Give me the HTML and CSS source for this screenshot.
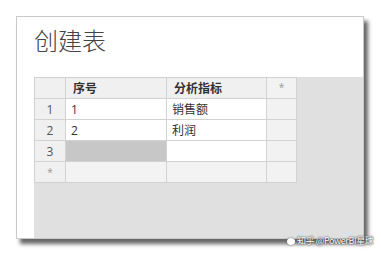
FILE: index.html
```html
<!DOCTYPE html>
<html lang="zh-CN">
<head>
    <meta charset="UTF-8">
    <title>创建表</title>
    <link rel="stylesheet" href="styles.css">
</head>
<body>
    <div class="dialog">
        <h1 class="title">创建表</h1>
        <div class="grid-area">
            <table class="grid">
                <tr class="head-row">
                    <td class="row-head"></td>
                    <td class="col-a">序号</td>
                    <td class="col-b">分析指标</td>
                    <td class="col-new">*</td>
                </tr>
                <tr>
                    <td class="row-head">1</td>
                    <td>1</td>
                    <td>销售额</td>
                    <td class="col-new"></td>
                </tr>
                <tr>
                    <td class="row-head">2</td>
                    <td>2</td>
                    <td>利润</td>
                    <td class="col-new"></td>
                </tr>
                <tr>
                    <td class="row-head">3</td>
                    <td class="selected"></td>
                    <td></td>
                    <td class="col-new"></td>
                </tr>
                <tr class="new-row">
                    <td class="row-head star">*</td>
                    <td></td>
                    <td></td>
                    <td class="col-new"></td>
                </tr>
            </table>
        </div>
    </div>
    <div class="watermark"><span class="wm-icon"></span>知乎 @PowerBI星球</div>
</body>
</html>
```

FILE: styles.css
```css
* {
    margin: 0;
    padding: 0;
    box-sizing: border-box;
}

body {
    width: 381px;
    height: 256px;
    background: #fff;
    font-family: 'Open Sans', 'Noto Sans CJK SC', sans-serif;
    color: #333;
    overflow: hidden;
    position: relative;
}

.dialog {
    margin: 16px 0 0 16px;
    width: 348px;
    height: 223px;
    background: #fff;
    border: 1px solid #c9c9c9;
    box-shadow: 4px 5px 4px rgba(0, 0, 0, 0.6);
    display: flex;
    flex-direction: column;
}

.title {
    font-family: 'Noto Sans CJK SC', sans-serif;
    font-weight: 300;
    font-size: 24px;
    line-height: 28px;
    color: #444;
    margin: 9px 0 0 17px;
    height: 51px;
}

.grid-area {
    flex: 1;
    margin-left: 17px;
    background: #e0e0e0;
}

.grid {
    border-collapse: collapse;
    font-size: 12px;
}

.grid td {
    height: 21px;
    border: 1px solid #d2d2d2;
    background: #fff;
    padding: 0 0 0 5px;
    line-height: 19px;
    white-space: nowrap;
}

.grid .row-head {
    width: 31px;
    padding: 0;
    text-align: center;
    background: #f0f0f0;
    color: #555;
}

.grid .col-a,
.grid .col-b {
    font-weight: bold;
    padding-left: 7px;
}

.col-a { width: 101px; }
.col-b { width: 100px; }

.grid .col-new {
    width: 30px;
    padding: 0;
    background: #f2f2f2;
    text-align: center;
    color: #999;
    font-size: 10px;
    vertical-align: top;
}

.head-row td {
    background: #f0f0f0;
}

.grid .selected {
    background: #c7c7c7;
}

.new-row td {
    background: #f3f3f3;
}

.grid .star {
    color: #999;
    font-size: 10px;
}

.watermark {
    position: absolute;
    left: 287px;
    top: 235px;
    font-family: 'Noto Sans CJK SC', sans-serif;
    font-size: 9px;
    letter-spacing: -0.4px;
    line-height: 12px;
    color: #fff;
    text-shadow: 0 0 2px #444, 0 0 1px #333;
    display: flex;
    align-items: center;
    gap: 2px;
    white-space: nowrap;
}

.wm-icon {
    width: 8px;
    height: 7px;
    border-radius: 50%;
    background: #fff;
    box-shadow: 0 0 2px #555;
}
```
